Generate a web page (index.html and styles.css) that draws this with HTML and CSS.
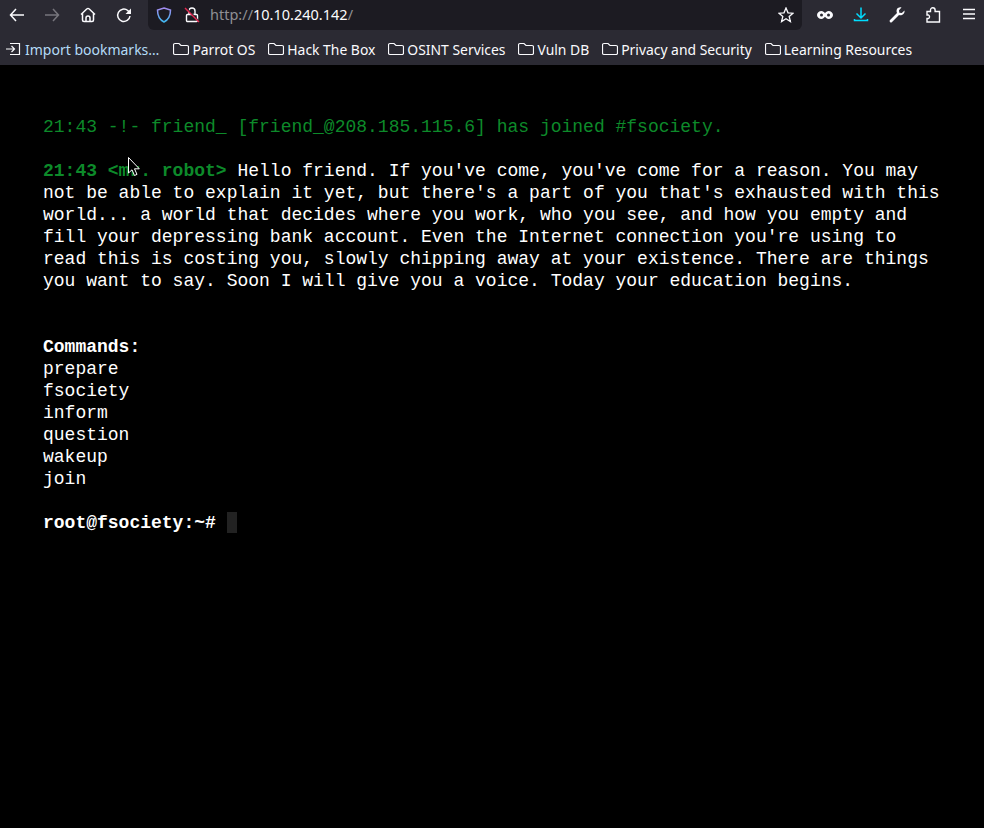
FILE: index.html
```html
<!DOCTYPE html>
<html lang="en">
<head>
<meta charset="utf-8">
<title>fsociety</title>
<link rel="stylesheet" href="styles.css">
</head>
<body>
<svg class="defs" width="0" height="0"><defs>
  <path id="folder" d="M2 2.500H6L8 4.500H14A1.500 1.500 0 0 1 15.500 6V12A1.500 1.500 0 0 1 14 13.500H2A1.500 1.500 0 0 1 .5 12V4A1.500 1.500 0 0 1 2 2.500Z"/>
  <linearGradient id="shieldGrad" x1="0" y1="0" x2="0" y2="1"><stop offset="0" stop-color="#a58bf0"/><stop offset="1" stop-color="#3fb8f0"/></linearGradient>
</defs></svg>
<header class="chrome">
  <div class="toolbar">
    <div class="nav">
      <button class="btn first-btn"><svg viewBox="0 0 16 16"><path d="M15 8H1.500M7 2 1.500 8 7 14"/></svg></button>
      <button class="btn dim"><svg viewBox="0 0 16 16"><path d="M1 8H14.500M9 2 14.500 8 9 14"/></svg></button>
      <button class="btn"><svg viewBox="0 0 16 16"><path d="M1 7.500 7 1.800a1.400 1.400 0 0 1 2 0L15 7.500M2.500 6.500V13A1.500 1.500 0 0 0 4 14.500H12A1.500 1.500 0 0 0 13.500 13V6.500M6 14.500V11a2 2 0 0 1 4 0V14.500"/></svg></button>
      <button class="btn"><svg viewBox="0 0 16 16"><path d="M14 9A6.200 6.200 0 1 1 11.800 3.500L13 5"/><path class="solid" d="M15 1.500V7H9.500Z"/></svg></button>
    </div>
    <div class="urlbar">
      <svg class="shield" viewBox="0 0 16 16"><path d="M8 1 14.500 3C14.500 9 13 12.500 8 15 3 12.500 1.500 9 1.500 3Z"/></svg>
      <svg class="lock" viewBox="0 0 16 16"><path class="w" d="M5 7.500V4a3 3 0 0 1 6 0V7.500M3.500 7.500H12.500A1 1 0 0 1 13.500 8.500V13.500A1 1 0 0 1 12.500 14.500H3.500A1 1 0 0 1 2.500 13.500V8.500A1 1 0 0 1 3.500 7.500Z"/><path class="gap" d="M2 .5 15 14.500"/><path class="r" d="M1 1 15 15"/></svg>
      <span class="url"><span class="faint">http://</span>10.10.240.142<span class="faint">/</span></span>
      <svg class="star" viewBox="0 0 16 16"><path d="M8 1 10 5.800 15 6.200 11.200 9.500 12.400 14.500 8 11.800 3.600 14.500 4.800 9.500 1 6.200 6 5.800Z"/></svg>
    </div>
    <div class="tools">
      <svg class="tool" viewBox="0 0 16 16"><path class="fillw" d="M4.500 4C6 4 7 5 8 6.200 9 5 10 4 11.500 4 14 4 16 5.800 16 8S14 12 11.500 12C10 12 9 11 8 9.800 7 11 6 12 4.500 12 2 12 0 10.200 0 8S2 4 4.500 4ZM4.500 6.500A1.500 1.500 0 1 0 4.500 9.500 1.500 1.500 0 1 0 4.500 6.500ZM11.500 6.500A1.500 1.500 0 1 0 11.500 9.500 1.500 1.500 0 1 0 11.500 6.500Z"/></svg>
      <svg class="tool dl" viewBox="0 0 16 16"><path d="M8 .5V10.500M3.500 6.500 8 11 12.500 6.500M1.500 12V13.500H14.500V12"/></svg>
      <svg class="tool" viewBox="0 0 16 16"><path class="fillw" d="M15.500 3.500 12.800 6 10.300 5.700 10 3.200 12.500.5C10.500 0 8 .8 7.600 3.200 7.400 4.300 7.600 5.200 8 6L1 13a1.400 1.400 0 0 0 2 2L10 8.100C12.800 9 16 6.800 15.500 3.500Z"/></svg>
      <svg class="tool" viewBox="0 0 16 16"><path d="M2 4.500H5.500V3a2.300 2.300 0 0 1 4.600 0V4.500H14.500V15H2V11.500H3.500A2 2 0 0 0 3.500 8H2Z"/></svg>
      <svg class="tool menu" viewBox="0 0 16 16"><path d="M2 2.500H14M2 7H14M2 11.500H14"/></svg>
    </div>
  </div>
  <nav class="bookmarks">
    <a class="bm first"><svg viewBox="0 0 16 16"><path d="M5 2.500H14.500V13.500H5M1 8H9.500M6.500 5 9.500 8 6.500 11"/></svg><span class="import">Import bookmarks…</span></a>
    <a class="bm"><svg viewBox="0 0 16 16"><use href="#folder"/></svg>Parrot OS</a>
    <a class="bm"><svg viewBox="0 0 16 16"><use href="#folder"/></svg>Hack The Box</a>
    <a class="bm"><svg viewBox="0 0 16 16"><use href="#folder"/></svg>OSINT Services</a>
    <a class="bm"><svg viewBox="0 0 16 16"><use href="#folder"/></svg>Vuln DB</a>
    <a class="bm"><svg viewBox="0 0 16 16"><use href="#folder"/></svg>Privacy and Security</a>
    <a class="bm"><svg viewBox="0 0 16 16"><use href="#folder"/></svg>Learning Resources</a>
  </nav>
</header>
<main class="term">
<p class="join">21:43 -!- friend_ [friend_@208.185.115.6] has joined #fsociety.</p>
<p class="msg"><b class="nick">21:43 &lt;mr. robot&gt;</b> Hello friend. If you've come, you've come for a reason. You may<br>not be able to explain it yet, but there's a part of you that's exhausted with this<br>world... a world that decides where you work, who you see, and how you empty and<br>fill your depressing bank account. Even the Internet connection you're using to<br>read this is costing you, slowly chipping away at your existence. There are things<br>you want to say. Soon I will give you a voice. Today your education begins.</p>
<p class="cmds"><b>Commands:</b><br>prepare<br>fsociety<br>inform<br>question<br>wakeup<br>join</p>
<p class="prompt"><b>root@fsociety:~#</b> <span class="caret"></span></p>
<svg class="pointer" viewBox="0 0 12 20"><path d="M.5.500V16L4 12.800 6.500 18.500 9 17.400 6.500 11.800H11.300Z"/></svg>
</main>
</body>
</html>
```
FILE: styles.css
```css
* { box-sizing: border-box; }
html, body { margin: 0; height: 100%; background: #000; }
body { overflow: hidden; }
.defs { position: absolute; }

.chrome { height: 65px; background: #2b2a33; color: #fbfbfe; font-family: "Noto Sans", sans-serif; }
.toolbar { height: 30px; display: flex; align-items: flex-start; }
.nav { display: flex; width: 148px; }
.btn { width: 36px; height: 30px; padding: 0; background: none; border: 0; display: flex; align-items: center; justify-content: center; }
.first-btn { width: 34px; }
.btn svg { width: 16px; height: 16px; fill: none; stroke: #fbfbfe; stroke-width: 1.500; }
.btn .solid { fill: #fbfbfe; stroke: none; }
.btn.dim svg { stroke: #77767d; }

.urlbar { width: 654px; height: 30px; background: #1c1b22; border-radius: 0 0 6px 6px; display: flex; align-items: center; padding: 0 8px; }
.urlbar svg { fill: none; flex: none; }
.shield { width: 16px; height: 16px; stroke: url(#shieldGrad); stroke-width: 1.500; margin-right: 12px; }
.lock { width: 16px; height: 16px; stroke-width: 1.400; margin-right: 10px; }
.lock .w { stroke: #fbfbfe; }
.lock .gap { stroke: #1c1b22; stroke-width: 1.500; }
.lock .r { stroke: #e22850; }
.url { flex: 1; margin-top: -2px; font-size: 14.500px; color: #fbfbfe; white-space: nowrap; }
.faint { color: #8f8f94; }
.star { width: 16px; height: 16px; stroke: #fbfbfe; stroke-width: 1.300; }

.tools { flex: 1; height: 30px; display: flex; align-items: center; padding-left: 15px; }
.tool { width: 16px; height: 16px; flex: none; fill: none; stroke: #fbfbfe; stroke-width: 1.400; margin-right: 20px; }
.tool .fillw { fill: #fbfbfe; stroke: none; fill-rule: evenodd; }
.tool.dl { stroke: #00ddff; stroke-width: 1.500; }
.tool.menu { margin-right: 0; stroke-width: 1.300; }

.bookmarks { height: 35px; display: flex; align-items: center; padding: 3px 0 0 5px; gap: 13px; font-size: 13.900px; }
.bm { display: flex; align-items: center; gap: 3px; white-space: nowrap; }
.bm svg { width: 16px; height: 16px; fill: none; stroke: #fbfbfe; stroke-width: 1.200; flex: none; }
.first { gap: 4px; margin-right: 1px; font-size: 14px; }
.import { color: #b4dbf7; }

.term { position: relative; height: 763px; padding: 51px 0 0 43px; color: #fff; background: #000; font: 18px/22px "Liberation Mono", monospace; white-space: nowrap; }
.term p { margin: 0 0 22px; }
.join { color: #0d8a2a; }
.term .msg { color: #fff; margin-bottom: 44px; }
.nick { color: #0d8a2a; }
.caret { display: inline-block; width: 10px; height: 21px; background: #222; vertical-align: -5px; }
.pointer { position: absolute; left: 128px; top: 92px; width: 12px; height: 20px; fill: #000; stroke: #fff; stroke-width: 1; }
```
